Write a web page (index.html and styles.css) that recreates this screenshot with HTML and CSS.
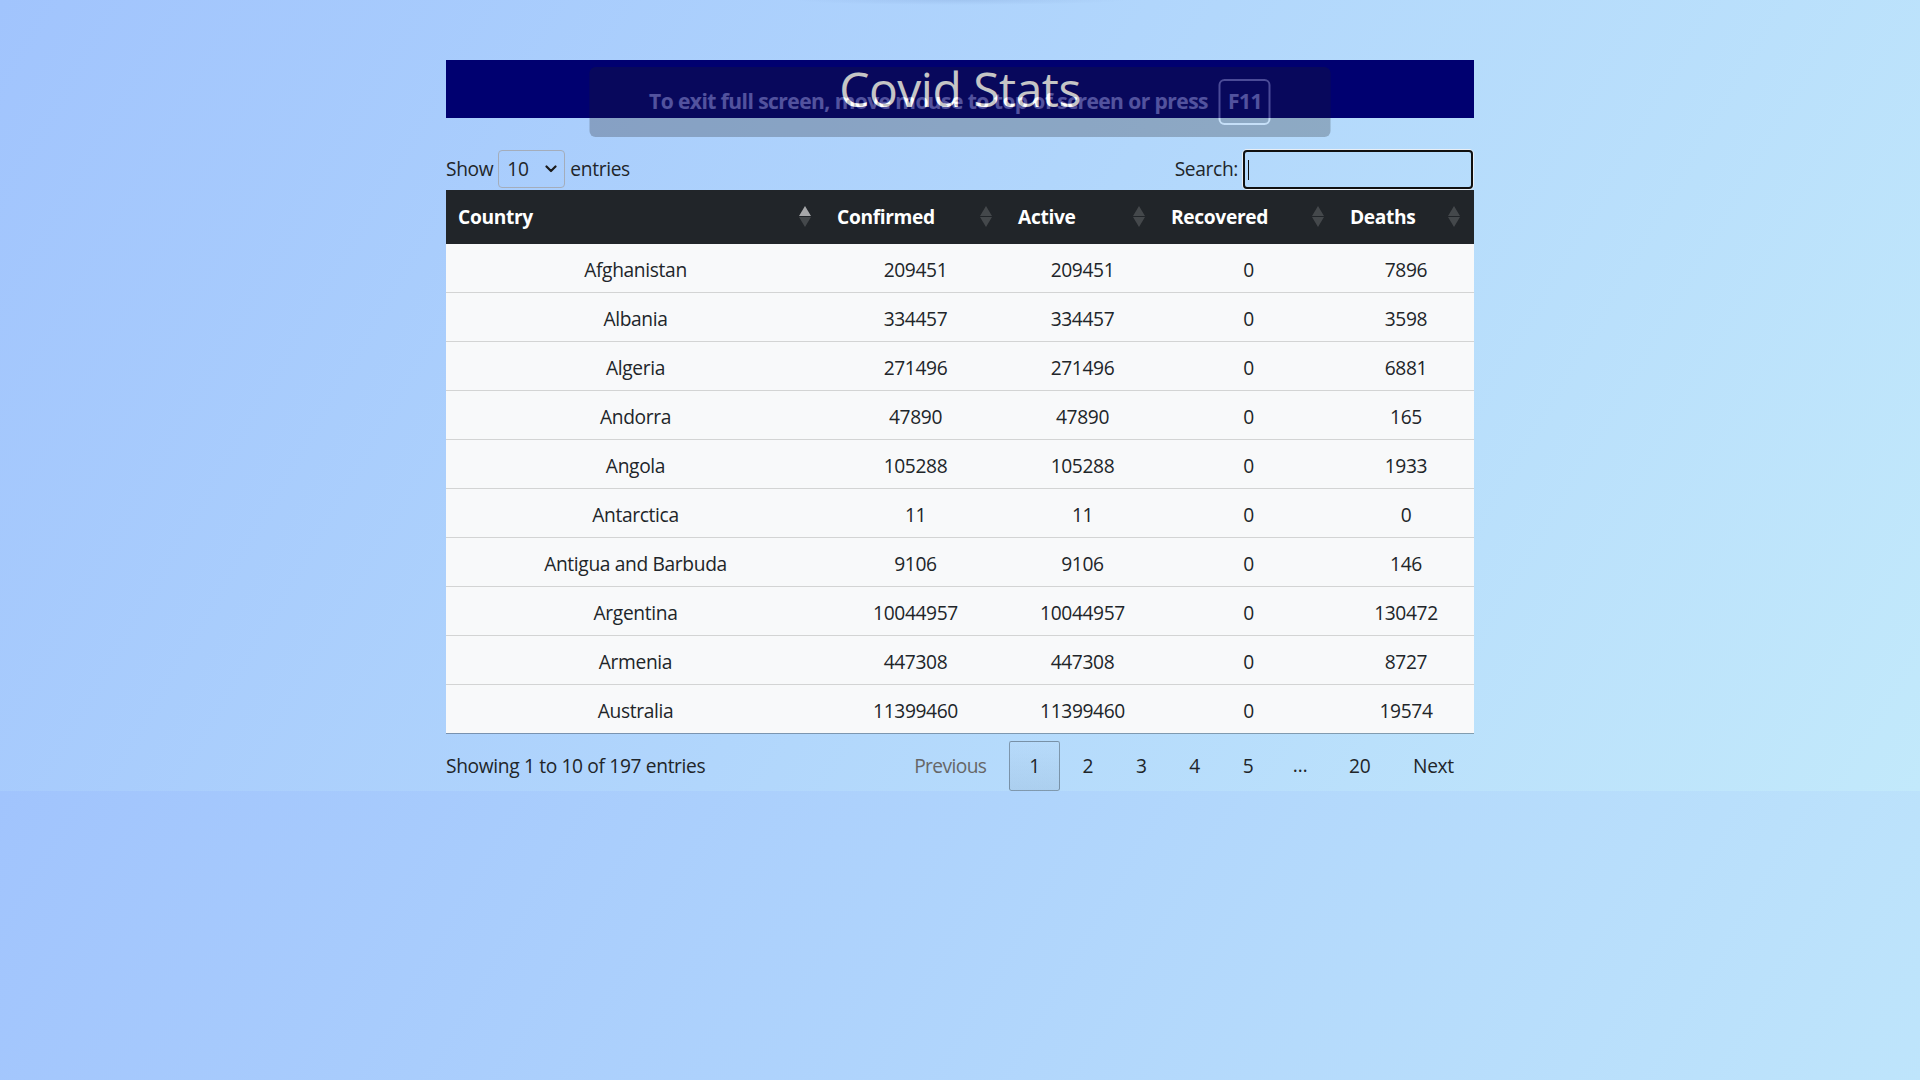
FILE: index.html
```html
<!DOCTYPE html>
<html lang="en">
<head>
<meta charset="utf-8">
<title>Covid Stats</title>
<link rel="stylesheet" href="styles.css">
</head>
<body>
<div class="edge-shadow"></div>
<main class="page">
  <header class="banner"><h1>Covid Stats</h1></header>

  <div class="controls">
    <label class="length">Show
      <span class="select-wrap">
        <select class="len-select">
          <option selected>10</option>
          <option>25</option>
          <option>50</option>
          <option>100</option>
        </select>
        <svg class="chev" width="12" height="8" viewBox="0 0 12 8" aria-hidden="true"><polyline points="1.5,1.5 6,6 10.5,1.5" fill="none" stroke="#1b1b1b" stroke-width="2.2" stroke-linecap="round" stroke-linejoin="round"/></svg>
      </span>
      entries</label>
    <label class="search">Search:<span class="search-wrap"><input class="search-input" type="search"><span class="caret"></span></span></label>
  </div>

  <table class="stats">
    <colgroup>
      <col class="c-country"><col class="c-confirmed"><col class="c-active"><col class="c-recovered"><col class="c-deaths">
    </colgroup>
    <thead>
      <tr>
        <th class="sort asc">Country</th>
        <th class="sort">Confirmed</th>
        <th class="sort">Active</th>
        <th class="sort">Recovered</th>
        <th class="sort">Deaths</th>
      </tr>
    </thead>
    <tbody>
      <tr><td>Afghanistan</td><td>209451</td><td>209451</td><td>0</td><td>7896</td></tr>
      <tr><td>Albania</td><td>334457</td><td>334457</td><td>0</td><td>3598</td></tr>
      <tr><td>Algeria</td><td>271496</td><td>271496</td><td>0</td><td>6881</td></tr>
      <tr><td>Andorra</td><td>47890</td><td>47890</td><td>0</td><td>165</td></tr>
      <tr><td>Angola</td><td>105288</td><td>105288</td><td>0</td><td>1933</td></tr>
      <tr><td>Antarctica</td><td>11</td><td>11</td><td>0</td><td>0</td></tr>
      <tr><td>Antigua and Barbuda</td><td>9106</td><td>9106</td><td>0</td><td>146</td></tr>
      <tr><td>Argentina</td><td>10044957</td><td>10044957</td><td>0</td><td>130472</td></tr>
      <tr><td>Armenia</td><td>447308</td><td>447308</td><td>0</td><td>8727</td></tr>
      <tr><td>Australia</td><td>11399460</td><td>11399460</td><td>0</td><td>19574</td></tr>
    </tbody>
  </table>

  <div class="table-footer">
    <div class="info">Showing 1 to 10 of 197 entries</div>
    <nav class="pager">
      <a class="pg disabled">Previous</a>
      <a class="pg current">1</a>
      <a class="pg">2</a>
      <a class="pg">3</a>
      <a class="pg">4</a>
      <a class="pg">5</a>
      <span class="ellipsis">…</span>
      <a class="pg">20</a>
      <a class="pg">Next</a>
    </nav>
  </div>
</main>

<div class="fs-bubble">
  <span class="fs-text">To exit full screen, move mouse to top of screen or press</span>
  <kbd class="fs-key">F11</kbd>
</div>
</body>
</html>
```

FILE: styles.css
```css
html {
  background: linear-gradient(120deg, #a1c4fd 0%, #c2e9fb 100%);
}

body {
  margin: 0;
  font-family: "Open Sans", "Noto Sans", "Liberation Sans", sans-serif;
  font-size: 19.2px;
  line-height: 1.5;
  letter-spacing: -0.35px;
  color: #212529;
}

.edge-shadow {
  position: absolute;
  top: 0;
  left: 50%;
  transform: translateX(-50%);
  width: 340px;
  height: 5px;
  background: radial-gradient(ellipse at top, rgba(40, 70, 140, 0.10), rgba(40, 70, 140, 0) 70%);
}

.page {
  width: 1028px;
  margin: 0 auto;
  padding-top: 60px;
}

.banner {
  background: #000070;
  height: 58px;
}

.banner h1 {
  margin: 0;
  font-size: 48px;
  line-height: 58px;
  font-weight: 500;
  text-align: center;
  color: #ffffff;
  letter-spacing: -0.5px;
}

/* controls */
.controls {
  display: flex;
  justify-content: space-between;
  align-items: center;
  height: 39px;
  margin-top: 31px;
  margin-bottom: 2px;
}

.length {
  display: flex;
  align-items: center;
  gap: 5px;
  padding-top: 1px;
}

.select-wrap {
  position: relative;
  display: inline-block;
  height: 38px;
}

.len-select {
  appearance: none;
  -webkit-appearance: none;
  width: 67px;
  height: 38px;
  padding: 0 0 0 8px;
  border: 1px solid #a4adbb;
  border-radius: 4px;
  background: transparent;
  font: inherit;
  letter-spacing: inherit;
  color: #212529;
}

.chev {
  position: absolute;
  right: 8px;
  top: 15px;
  pointer-events: none;
}

.search {
  display: flex;
  align-items: center;
  gap: 5px;
  margin-right: 1px;
  padding-top: 1px;
}

.search-wrap {
  position: relative;
  display: inline-block;
  height: 39px;
}

.search-input {
  box-sizing: border-box;
  width: 230px;
  height: 39px;
  border: 2px solid #101010;
  border-radius: 4px;
  box-shadow: 0 0 0 1px #e9eef4;
  background: transparent;
  outline: none;
  padding: 0 6px;
  font: inherit;
}

.caret {
  position: absolute;
  left: 5px;
  top: 10px;
  width: 1px;
  height: 20px;
  background: #111;
}

/* table */
.stats {
  width: 1028px;
  table-layout: fixed;
  border-collapse: collapse;
}

.c-country { width: 379px; }
.c-confirmed { width: 181px; }
.c-active { width: 153px; }
.c-recovered { width: 179px; }
.c-deaths { width: 136px; }

.stats thead th {
  position: relative;
  background: #212529;
  color: #ffffff;
  font-weight: 700;
  text-align: left;
  padding: 13px 26px 12px 12px;
  line-height: 28.8px;
  height: 54px;
  box-sizing: border-box;
}

.sort::before,
.sort::after {
  content: "";
  position: absolute;
  right: 14px;
  width: 12px;
  height: 10px;
  background: rgba(255, 255, 255, 0.16);
}

.sort::before {
  top: 16px;
  clip-path: polygon(50% 0, 100% 100%, 0 100%);
}

.sort::after {
  top: 27px;
  clip-path: polygon(0 0, 100% 0, 50% 100%);
}

.sort.asc::before {
  background: rgba(255, 255, 255, 0.6);
}

.stats tbody td {
  background: #f8f9fa;
  text-align: center;
  padding: 12px 12px 7.2px;
  line-height: 28.8px;
  border-top: 1px solid rgba(0, 0, 0, 0.15);
}

.stats tbody tr:first-child td {
  border-top: none;
}

.stats tbody tr:last-child td {
  border-bottom: 1px solid rgba(0, 0, 0, 0.3);
}

/* footer */
.table-footer {
  display: flex;
  justify-content: space-between;
  align-items: center;
  padding-top: 7px;
}

.info {
  padding-top: 1px;
}

.pager {
  display: flex;
  align-items: center;
}

.pg {
  display: inline-block;
  box-sizing: border-box;
  min-width: 28.8px;
  padding: 10px 19.2px 9.2px;
  margin-left: 2.4px;
  line-height: 28.8px;
  border: 1px solid transparent;
  border-radius: 2.4px;
  text-align: center;
  color: #212529;
  cursor: pointer;
}

.pg.disabled {
  color: #666666;
  cursor: default;
  letter-spacing: -0.6px;
}

.pg.current {
  border-color: rgba(0, 0, 0, 0.3);
  background: linear-gradient(to bottom, rgba(230, 230, 230, 0.05) 0%, rgba(0, 0, 0, 0.05) 100%);
}

.ellipsis {
  padding: 0 19.2px;
}

/* browser full-screen notice */
.fs-bubble {
  position: absolute;
  top: 67px;
  left: 50%;
  transform: translateX(-50%);
  box-sizing: border-box;
  width: 741px;
  height: 70px;
  display: flex;
  align-items: center;
  justify-content: center;
  gap: 11px;
  background: rgba(32, 33, 36, 0.8);
  border-radius: 6px;
  opacity: 0.32;
  color: #ffffff;
  font-family: "Open Sans", "Noto Sans", sans-serif;
  font-size: 21px;
  font-weight: 700;
  letter-spacing: -0.55px;
}

.fs-key {
  box-sizing: border-box;
  width: 52px;
  height: 46px;
  display: flex;
  align-items: center;
  justify-content: center;
  border: 2px solid rgba(255, 255, 255, 0.9);
  border-radius: 6px;
  font-family: inherit;
  font-size: 21px;
  font-weight: 700;
}
```
